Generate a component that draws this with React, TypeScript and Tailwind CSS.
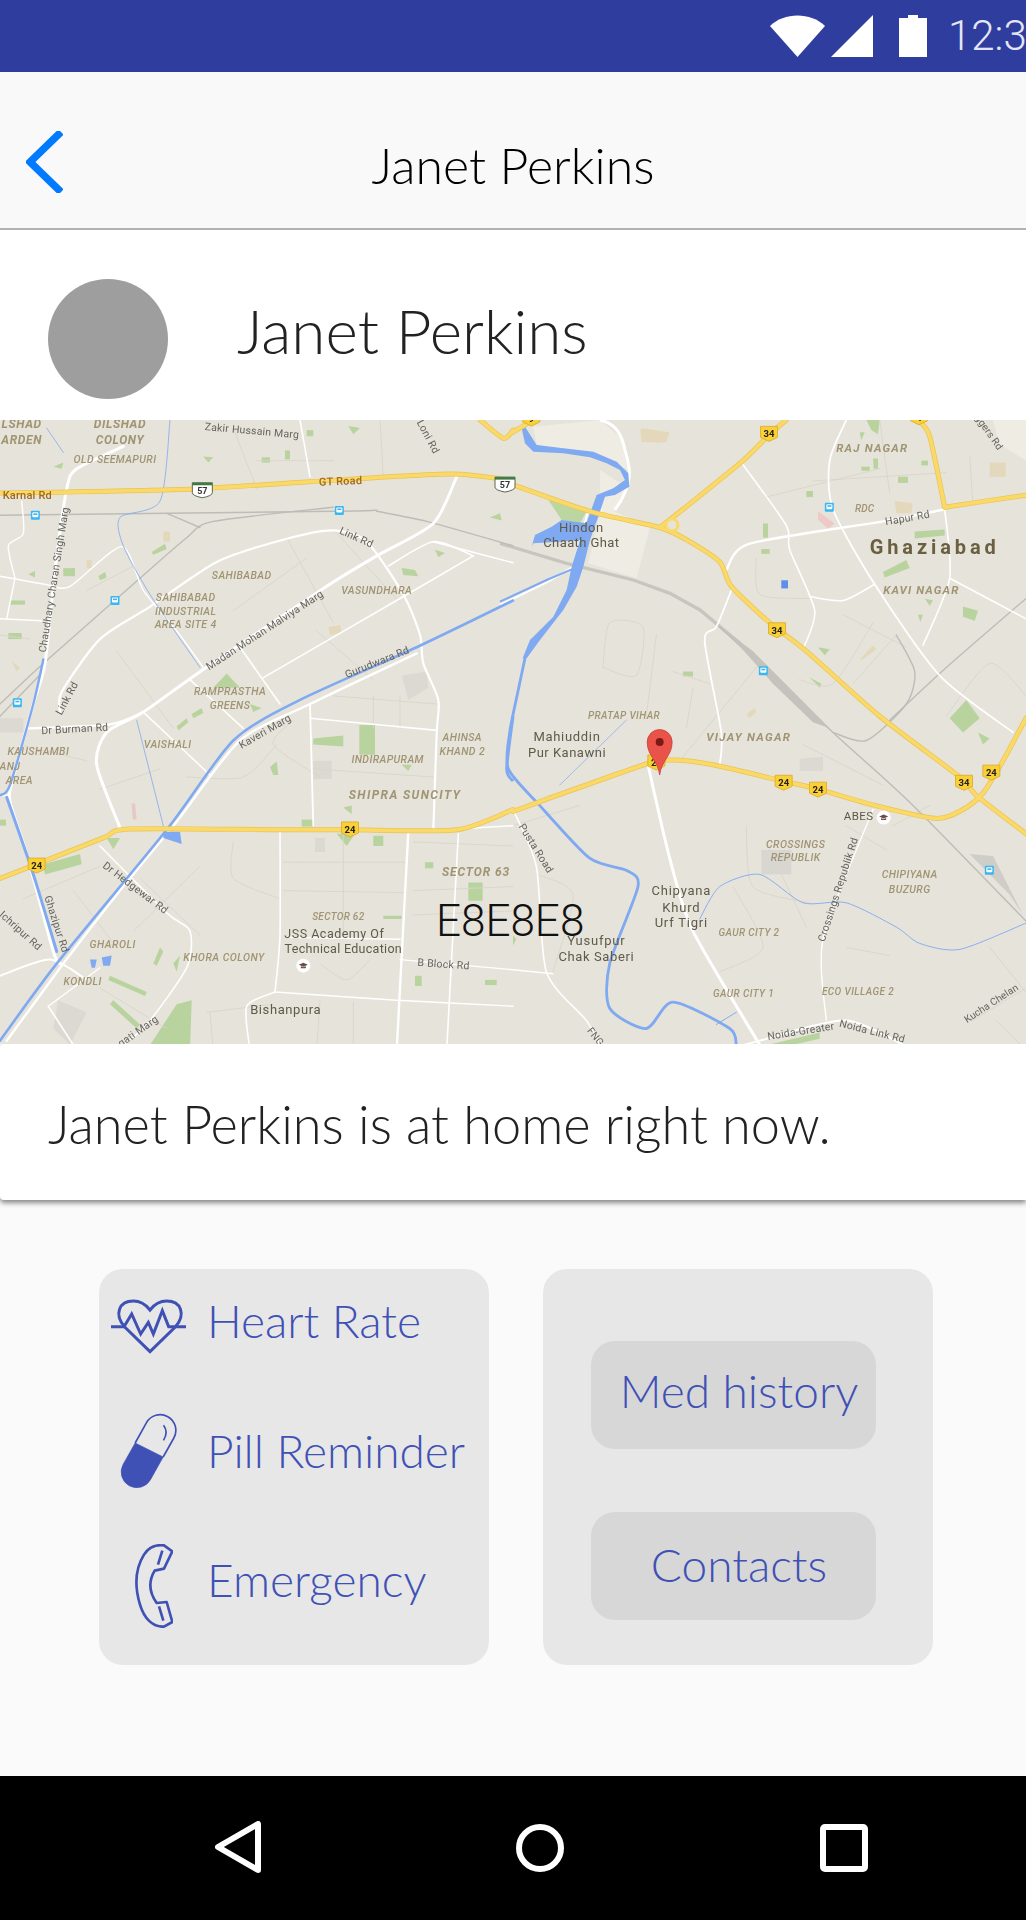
import React from "react";

// map data is noted in crop space: x 0..3078, y 0..1536, left half then right half (R adds 1539)
const K = 0.4057;
const R = 1539;
type Pt = [number, number];

const pts = (list: Pt[], off = 0) =>
  list.map(([x, y]) => `${((x + off) / 3).toFixed(1)},${(y * K).toFixed(1)}`).join(" ");

// soft curve through the noted points, roads on the map are not angular
const curve = (list: Pt[], off = 0) => {
  const p = list.map(([x, y]) => [(x + off) / 3, y * K]);
  let d = `M${p[0][0].toFixed(1)} ${p[0][1].toFixed(1)}`;
  for (let i = 0; i < p.length - 1; i++) {
    const a = p[Math.max(i - 1, 0)];
    const b = p[i];
    const c = p[i + 1];
    const e = p[Math.min(i + 2, p.length - 1)];
    const c1x = b[0] + (c[0] - a[0]) / 8;
    const c1y = b[1] + (c[1] - a[1]) / 8;
    const c2x = c[0] - (e[0] - b[0]) / 8;
    const c2y = c[1] - (e[1] - b[1]) / 8;
    d += ` C${c1x.toFixed(1)} ${c1y.toFixed(1)} ${c2x.toFixed(1)} ${c2y.toFixed(1)} ${c[0].toFixed(1)} ${c[1].toFixed(1)}`;
  }
  return d;
};

const streets: Pt[][] = [
  [[1000, 680], [1310, 700]], [[1120, 680], [1120, 760]], [[1200, 680], [1200, 760]], [[940, 860], [1300, 880]],
  [[850, 1090], [1220, 1090]], [[850, 1160], [1220, 1165]], [[1030, 1020], [1030, 1280]], [[700, 1040], [700, 1130], [840, 1180]],
  [[1240, 1040], [1539, 1050]], [[1240, 1220], [1539, 1210]], [[1240, 1160], [1539, 1150]], [[960, 1340], [1040, 1380], [1110, 1330]],
  [[620, 1460], [820, 1440]], [[630, 1460], [640, 1553]], [[960, 1430], [950, 1553]], [[1060, 1435], [1060, 1553]],
  [[700, 20], [770, 170]], [[770, 100], [1000, 100]], [[1140, 0], [1150, 140]], [[860, 290], [1000, 500]], [[1000, 270], [1200, 450]],
  [[920, 340], [700, 470]], [[950, 520], [1120, 640]], [[880, 740], [820, 800], [960, 880]], [[560, 880], [730, 880], [830, 800]],
  [[350, 570], [520, 760]], [[260, 420], [400, 360]], [[0, 530], [90, 540]], [[60, 800], [260, 840]], [[300, 910], [480, 860]],
  [[70, 1180], [300, 1100]], [[220, 1160], [350, 1300]], [[300, 1400], [500, 1500]], [[600, 1100], [400, 1260]], [[420, 1130], [600, 1270]],
];

const streetsR: Pt[][] = [
  [[270, 610], [290, 500], [390, 510], [370, 630], [270, 610]], [[430, 530], [400, 730]], [[480, 620], [590, 650]], [[540, 660], [520, 760]],
  [[0, 1000], [200, 950]], [[70, 1120], [180, 1170], [120, 1360]], [[700, 1000], [720, 1150], [890, 1190]], [[660, 1150], [750, 1300], [620, 1360]],
  [[760, 1040], [880, 1250]], [[1000, 1300], [1130, 1320]], [[1120, 1060], [1000, 1000]], [[760, 190], [1100, 120]], [[730, 340], [740, 430], [890, 440]],
  [[900, 150], [1300, 130]], [[1100, 0], [1130, 180]], [[1370, 90], [1380, 210]], [[990, 480], [1180, 560]], [[1080, 500], [960, 650], [860, 640]],
  [[1300, 730], [1430, 600], [1539, 680]], [[1020, 650], [1150, 530]], [[500, 840], [740, 600]], [[870, 800], [1110, 900]], [[1140, 1000], [1250, 950]],
  [[1430, 1300], [1539, 1410]], [[1380, 1480], [1539, 1400]], [[1450, 1480], [1539, 1553]],
];

const rail: Pt[][] = [
  [[0, 235], [1000, 225], [1130, 222]], [[1130, 225], [1280, 250], [1539, 310]], [[0, 700], [130, 600], [420, 390], [560, 290], [640, 250], [1000, 215]],
  [[0, 730], [130, 620]], [[500, 230], [600, 265]],
];

const railR: Pt[][] = [
  [[620, 510], [960, 770], [1200, 950], [1539, 1235]],
  [[960, 770], [1060, 790], [1180, 700], [1205, 620], [1150, 530]], [[1130, 740], [1300, 610], [1539, 440]],
];

const white: [Pt[], number][] = [
  [[[370, 65], [230, 120], [200, 170], [165, 370], [135, 600], [100, 700], [40, 880], [30, 940], [80, 1070], [160, 1310], [180, 1340]], 3],
  [[[180, 720], [185, 670], [300, 540], [450, 460], [650, 350], [850, 295], [1000, 272], [1100, 300], [1210, 430], [1260, 530], [1270, 600], [1315, 690], [1310, 770], [1300, 1010]], 2.2],
  [[[1370, 140], [1300, 255], [1130, 335], [980, 410], [610, 615], [430, 720], [320, 770], [290, 850], [360, 1005]], 3],
  [[[85, 760], [330, 750], [430, 720]], 2.2],
  [[[790, 635], [1200, 440], [1420, 335]], 1.6],
  [[[1420, 335], [1300, 300], [1165, 360]], 1.6],
  [[[1300, 300], [1539, 352]], 1.6],
  [[[720, 560], [840, 700]], 1.6],
  [[[570, 640], [730, 760]], 1.6],
  [[[430, 720], [630, 875]], 1.6],
  [[[930, 700], [940, 1000]], 1.8],
  [[[930, 735], [1310, 765]], 1.6],
  [[[0, 385], [135, 405], [210, 410], [365, 312], [430, 420], [530, 520], [610, 610]], 1.4],
  [[[0, 490], [125, 495]], 1.4],
  [[[45, 390], [20, 490]], 1.4],
  [[[45, 390], [25, 310], [70, 280], [65, 200]], 1.4],
  [[[900, 0], [930, 140]], 1.6],
  [[[1250, 575], [930, 700], [720, 790], [530, 990], [350, 1170], [190, 1340], [20, 1530]], 2.4],
  [[[840, 1010], [840, 1270], [825, 1410]], 1.6],
  [[[825, 1410], [740, 1445], [750, 1553]], 1.6],
  [[[825, 1410], [1190, 1430], [1539, 1445]], 1.4],
  [[[1225, 1015], [1190, 1553]], 2.4],
  [[[1375, 1020], [1340, 1553]], 1.6],
  [[[300, 1050], [500, 1215], [570, 1260], [560, 1350], [440, 1490], [350, 1553]], 1.6],
  [[[145, 1445], [230, 1553]], 1.6],
  [[[145, 1445], [300, 1350]], 1.4],
  [[[0, 1370], [150, 1330], [260, 1380]], 2],
  [[[1200, 1330], [1539, 1355]], 1.4],
  [[[860, 1275], [1200, 1280]], 1.4],
  [[[1225, 1015], [1539, 1000]], 1.6],
  [[[0, 925], [30, 925]], 2],
];

const whiteR: [Pt[], number][] = [
  [[[690, 110], [820, 260], [830, 320], [905, 470], [870, 565]], 1.6],
  [[[640, 370], [710, 305], [1110, 250], [1295, 220]], 2.4],
  [[[1000, 0], [950, 100], [960, 220], [1085, 405], [1280, 630], [1500, 770]], 1.8],
  [[[1295, 220], [1310, 390], [1230, 555]], 1.6],
  [[[890, 435], [990, 445], [1085, 405]], 1.6],
  [[[1310, 390], [1539, 490]], 1.6],
  [[[655, 420], [610, 510], [575, 545], [625, 770], [620, 850]], 1.8],
  [[[405, 850], [470, 1080], [540, 1260], [740, 1540]], 3],
  [[[640, 1553], [740, 1530], [1000, 1480], [1200, 1553]], 2],
  [[[1080, 960], [930, 1280], [940, 1480]], 1.4],
  [[[0, 960], [70, 1100], [100, 1360], [220, 1480], [270, 1553]], 1.6],
  [[[0, 1355], [120, 1365]], 1.4],
];

const yellow: Pt[][] = [
  [[0, 180], [170, 178], [580, 170], [930, 152], [1350, 133], [1539, 150]],
  [[0, 1130], [110, 1095], [310, 1030], [390, 1008], [840, 1010], [1050, 1010], [1370, 1010], [1539, 960]],
  [[1440, 0], [1510, 45], [1539, 25]],
];

const yellowR: Pt[][] = [
  [[0, 160], [230, 225], [440, 265], [520, 295], [620, 350], [655, 410], [770, 500], [880, 570], [1100, 730], [1340, 880], [1390, 925], [1539, 1020]],
  [[440, 265], [510, 220], [690, 100], [770, 35], [820, 0]],
  [[0, 30], [50, 5]],
  [[0, 965], [100, 935], [400, 848], [480, 838], [600, 850], [810, 890], [915, 910], [1085, 950], [1270, 982], [1350, 960], [1410, 920], [1470, 840], [1539, 735]],
  [[1215, 0], [1250, 40], [1295, 215]],
  [[1295, 215], [1539, 185]],
];

const water: [Pt[], number][] = [
  [[[1539, 445], [1250, 560], [900, 690], [700, 790], [500, 1010], [170, 1340], [0, 1530]], 2.6],
  [[[20, 930], [100, 1120], [170, 1310]], 3],
  [[[130, 590], [100, 700], [30, 900], [0, 925]], 2.4],
  [[[510, 0], [480, 200], [360, 240], [370, 310], [450, 430], [600, 610]], 0.8],
  [[[410, 740], [490, 1000]], 0.8],
  [[[140, 20], [190, 80]], 0.8],
];

const waterR: [Pt[], number][] = [
  [[[36, 587], [12, 680], [-10, 770], [-14, 860], [80, 950], [230, 1080], [340, 1110], [375, 1150], [290, 1340], [290, 1450], [400, 1500], [480, 1435], [650, 1500], [670, 1540]], 2.8],
  [[[560, 1230], [620, 1150], [740, 1120], [870, 1190], [1000, 1190], [1150, 1250], [1220, 1290], [1340, 1305], [1539, 1240]], 0.9],
  [[[140, 900], [340, 740]], 0.7],
  [[[610, 1490], [670, 1460]], 1],
];

const greens: Pt[][] = [
  [[610, 90], [640, 92], [625, 105]], [[785, 92], [810, 92], [810, 105], [785, 105]], [[855, 75], [870, 75], [870, 97], [855, 97]], [[920, 25], [940, 25], [940, 40], [920, 40]],
  [[1045, 15], [1080, 20], [1060, 35]], [[160, 115], [190, 105], [185, 120]], [[455, 325], [495, 305], [500, 318], [460, 332]], [[1470, 240], [1500, 230], [1505, 248]],
  [[190, 365], [225, 365], [225, 385], [190, 385]], [[295, 385], [315, 375], [320, 388], [300, 395]], [[85, 380], [105, 372], [105, 388]], [[30, 445], [75, 445], [75, 455], [30, 455]],
  [[25, 525], [65, 525], [65, 540], [25, 540]], [[680, 625], [720, 660], [640, 660]], [[530, 755], [560, 735], [565, 745], [535, 765]], [[575, 725], [605, 710], [610, 722], [580, 735]],
  [[750, 700], [785, 710], [760, 720]], [[940, 785], [1030, 778], [1030, 805], [940, 800]], [[1078, 752], [1125, 752], [1125, 825], [1078, 825]], [[810, 855], [830, 842], [835, 875], [820, 875]],
  [[905, 985], [940, 985], [940, 1002], [905, 1002]], [[1030, 955], [1055, 950], [1055, 972]], [[1205, 850], [1235, 850], [1225, 865]], [[1010, 1020], [1065, 1020], [1040, 1050]],
  [[1120, 1025], [1150, 1025], [1150, 1050], [1120, 1050]], [[320, 1030], [360, 1030], [340, 1058]], [[130, 1095], [240, 1070], [245, 1095], [135, 1120]], [[1275, 1090], [1300, 1090], [1300, 1105], [1275, 1105]],
  [[1405, 1140], [1448, 1140], [1448, 1185], [1405, 1185]], [[1245, 1370], [1265, 1370], [1265, 1395], [1245, 1395]], [[1455, 1380], [1490, 1380], [1490, 1393], [1455, 1393]], [[1150, 1222], [1205, 1222], [1205, 1230], [1150, 1230]],
  [[440, 1553], [530, 1440], [575, 1430], [570, 1553]], [[330, 1370], [440, 1410], [435, 1420], [325, 1380]], [[340, 1430], [420, 1490], [410, 1500], [330, 1440]], [[460, 1340], [480, 1300], [490, 1310], [470, 1345]],
  [[1205, 365], [1245, 370], [1255, 385], [1210, 382]], [[1305, 320], [1335, 328], [1315, 338]], [[520, 1340], [540, 1320], [530, 1360]], [[0, 985], [18, 985], [18, 1000], [0, 1000]],
];

const greensR: Pt[][] = [
  [[1040, 30], [1055, 30], [1045, 50]], [[1060, 0], [1100, 0], [1095, 35], [1075, 25]], [[1045, 115], [1070, 115], [1070, 125], [1045, 125]],
  [[1080, 95], [1095, 95], [1095, 120], [1082, 120]], [[1155, 140], [1185, 140], [1185, 155], [1155, 155]], [[1225, 100], [1245, 100], [1245, 112], [1225, 112]], [[880, 175], [900, 175], [900, 190], [880, 190]],
  [[750, 255], [765, 255], [765, 290], [750, 290]], [[745, 318], [770, 318], [770, 330], [745, 330]], [[1110, 375], [1180, 345], [1190, 365], [1115, 388]], [[1205, 275], [1295, 270], [1295, 285], [1205, 292]],
  [[1350, 460], [1395, 470], [1385, 495], [1350, 485]], [[1235, 440], [1260, 445], [1250, 458]], [[1215, 480], [1230, 480], [1222, 498]], [[915, 560], [950, 565], [935, 580]], [[510, 620], [540, 620], [540, 632], [510, 632]],
  [[890, 635], [925, 650], [920, 660]], [[1310, 735], [1360, 690], [1400, 735], [1350, 770]], [[1395, 770], [1430, 785], [1410, 800]], [[765, 1540], [920, 1510], [920, 1525], [770, 1553]], [[0, 1270], [10, 1280], [0, 1295]],
];

const blocks: [Pt[], string][] = [
  [[[915, 225], [965, 255], [945, 268], [915, 245]], "#efc9c8"],
  [[[805, 395], [825, 395], [825, 415], [805, 415]], "#5b8fe8"],
  [[[1430, 105], [1478, 105], [1478, 140], [1430, 140]], "#e4d8bc"],
  [[[385, 20], [470, 30], [460, 55], [385, 55]], "#e4d8bc"],
  [[[1145, 200], [1200, 205], [1195, 230], [1150, 230]], "#e4d8bc"],
  [[[1040, 590], [1080, 555], [1090, 565], [1050, 590]], "#e4d8bc"],
  [[[700, 725], [725, 710], [730, 720], [710, 735]], "#e4d8bc"],
  [[[745, 1060], [835, 1060], [835, 1120], [745, 1120]], "#d8d6d0"],
  [[[860, 835], [930, 830], [930, 865], [860, 865]], "#dcd9d2"],
];

const blocksL: [Pt[], string][] = [
  [[[940, 840], [995, 840], [995, 885], [940, 885]], "#dcd9d2"],
  [[[1205, 630], [1280, 620], [1285, 660], [1225, 690]], "#dcd9d2"],
  [[[0, 735], [70, 735], [70, 770], [0, 770]], "#dcd9d2"],
  [[[395, 945], [405, 945], [410, 985], [398, 985]], "#e9c7c4"],
  [[[985, 510], [1020, 505], [1025, 525], [990, 530]], "#e4d8bc"],
  [[[260, 345], [275, 345], [275, 365], [260, 365]], "#e4d8bc"],
  [[[35, 595], [60, 610], [50, 620]], "#e4d8bc"],
  [[[490, 275], [510, 275], [510, 300], [490, 300]], "#e4d8bc"],
  [[[175, 1430], [260, 1460], [210, 1540], [160, 1500]], "#dcd9d2"],
  [[[945, 1030], [975, 1030], [975, 1065], [945, 1065]], "#dcd9d2"],
];

type Label = [string, number, number, number, string, number, number?, number?];
const PLACE = "#a09473";
const ROAD = "#64645e";
const DARK = "#5f5a48";
const labels: Label[] = [
  ["LSHAD", 65, 20, 12, PLACE, 700, 0, 0.6], ["ARDEN", 65, 58, 12, PLACE, 700, 0, 0.6], ["DILSHAD", 360, 20, 12, PLACE, 700, 0, 0.6], ["COLONY", 360, 58, 12, PLACE, 700, 0, 0.6],
  ["OLD SEEMAPURI", 345, 105, 10.5, PLACE, 500, 0, 0.4], ["SAHIBABAD", 725, 393, 10.5, PLACE, 500, 0, 0.4], ["VASUNDHARA", 1130, 428, 10.5, PLACE, 500, 0, 0.4],
  ["SAHIBABAD", 557, 446, 10.5, PLACE, 500, 0, 0.4], ["INDUSTRIAL", 557, 480, 10.5, PLACE, 500, 0, 0.4], ["AREA SITE 4", 557, 513, 10.5, PLACE, 500, 0, 0.4],
  ["RAMPRASTHA", 690, 677, 10.5, PLACE, 500, 0, 0.4], ["GREENS", 690, 712, 10.5, PLACE, 500, 0, 0.4], ["VAISHALI", 503, 808, 10.5, PLACE, 500, 0, 0.4], ["KAUSHAMBI", 115, 825, 10.5, PLACE, 500, 0, 0.4],
  ["ANJ", 30, 862, 10.5, PLACE, 500, 0, 0.4], ["AREA", 58, 898, 10.5, PLACE, 500, 0, 0.4], ["INDIRAPURAM", 1163, 845, 10.5, PLACE, 500, 0, 0.4], ["AHINSA", 1387, 790, 10.5, PLACE, 500, 0, 0.4],
  ["KHAND 2", 1387, 825, 10.5, PLACE, 500, 0, 0.4], ["SHIPRA SUNCITY", 1215, 935, 12, PLACE, 700, 0, 1.4], ["SECTOR 63", 1428, 1124, 12, PLACE, 700, 0, 0.9], ["SECTOR 62", 1015, 1233, 10, PLACE, 500, 0, 0.3],
  ["GHAROLI", 338, 1302, 10.5, PLACE, 500, 0, 0.5], ["KHORA COLONY", 672, 1333, 10.5, PLACE, 500, 0, 0.5], ["KONDLI", 248, 1392, 10.5, PLACE, 500, 0, 0.5],
  ["JSS Academy Of", 1003, 1277, 12.5, DARK, 400, 0, 0.5], ["Technical Education", 1030, 1313, 12.5, DARK, 400, 0, 0.3], ["Bishanpura", 857, 1465, 13, DARK, 400, 0, 0.6],
  ["B Block Rd", 1330, 1350, 10.5, ROAD, 400, 4, 0.2], ["Karnal Rd", 82, 195, 11, "#a0691c", 500, 0, 0.2], ["GT Road", 1022, 160, 11, "#a0691c", 500, -2, 0.2],
  ["Zakir Hussain Marg", 755, 35, 10.5, ROAD, 400, 5, 0.2], ["Loni Rd", 1275, 45, 10.5, ROAD, 400, 62, 0.2], ["Link Rd", 1065, 297, 10.5, ROAD, 400, 24, 0.2], ["Link Rd", 210, 690, 10.5, ROAD, 400, -62, 0.2],
  ["Chaudhary Charan Singh Marg", 172, 395, 10.5, ROAD, 400, -81, 0.2], ["Madan Mohan Malviya Marg", 800, 525, 10.5, ROAD, 400, -33, 0.2], ["Gurudwara Rd", 1135, 605, 10.5, ROAD, 400, -22, 0.2],
  ["Kaveri Marg", 800, 775, 10.5, ROAD, 400, -30, 0.2], ["Dr Burman Rd", 225, 770, 10.5, ROAD, 400, -3, 0.2], ["Dr Hedgewar Rd", 400, 1160, 10.5, ROAD, 400, 37, 0.2], ["Ghazipur Rd", 160, 1245, 10.5, ROAD, 400, 72, 0.2],
  ["Ichripur Rd", 55, 1265, 10.5, ROAD, 400, 42, 0.2], ["Pragati Marg", 400, 1525, 10.5, ROAD, 400, -35, 0.2],
];

const labelsR: Label[] = [
  ["RAJ NAGAR", 1078, 80, 11.5, PLACE, 700, 0, 1.2], ["RDC", 1055, 228, 10, PLACE, 500, 0, 0.2], ["Hapur Rd", 1185, 250, 10.5, ROAD, 400, -10, 0.2], ["Ghaziabad", 1265, 330, 20, "#6b5f42", 700, 0, 3.9],
  ["KAVI NAGAR", 1225, 430, 11.5, PLACE, 700, 0, 1.1], ["PRATAP VIHAR", 333, 738, 10, PLACE, 500, 0, 0.4], ["VIJAY NAGAR", 707, 790, 11.5, PLACE, 700, 0, 1.3], ["Hindon", 205, 275, 13, DARK, 400, 0, 0.5],
  ["Chaath Ghat", 205, 312, 13, DARK, 400, 0, 0.4], ["Mahiuddin", 162, 790, 13, DARK, 400, 0, 0.7], ["Pur Kanawni", 162, 830, 13, DARK, 400, 0, 0.5], ["ABES", 1037, 985, 11.5, DARK, 400, 0, 0.5],
  ["CROSSINGS", 848, 1055, 10.5, PLACE, 500, 0, 0.4], ["REPUBLIK", 848, 1088, 10.5, PLACE, 500, 0, 0.4], ["CHIPIYANA", 1190, 1130, 10.5, PLACE, 500, 0, 0.4], ["BUZURG", 1190, 1165, 10.5, PLACE, 500, 0, 0.4],
  ["Chipyana", 505, 1172, 13, DARK, 400, 0, 0.8], ["Khurd", 505, 1212, 13, DARK, 400, 0, 0.8], ["Urf Tigri", 505, 1250, 13, DARK, 400, 0, 0.8], ["Yusufpur", 250, 1295, 13, DARK, 400, 0, 0.8], ["Chak Saberi", 250, 1333, 13, DARK, 400, 0, 0.6],
  ["GAUR CITY 2", 708, 1272, 10, PLACE, 500, 0, 0.4], ["GAUR CITY 1", 692, 1423, 10, PLACE, 500, 0, 0.4], ["ECO VILLAGE 2", 1035, 1418, 10, PLACE, 500, 0, 0.4], ["Crossings Republik Rd", 985, 1160, 10.5, ROAD, 400, -72, 0.2],
  ["Pusta Road", 60, 1060, 10.5, ROAD, 400, 58, 0.2], ["FNG", 240, 1525, 10, ROAD, 400, 52, 0.2], ["Noida-Greater", 865, 1515, 10.5, ROAD, 400, -9, 0.2], ["Noida Link Rd", 1075, 1515, 10.5, ROAD, 400, 14, 0.2],
  ["Kucha Chelan", 1440, 1445, 10, ROAD, 400, -33, 0.1], ["ggers Rd", 1420, 35, 10, ROAD, 400, 55, 0.1],
];

const shields: [string, number, number][] = [
  ["24", 1050, 1008], ["24", 110, 1097], ["34", 768 + R, 33], ["34", 792 + R, 517], ["34", 1353 + R, 893], ["24", 812 + R, 893], ["24", 915 + R, 910], ["24", 1435 + R, 868], ["24", 430 + R, 843], ["9", 55 + R, -5], ["4", 1218 + R, -8],
];

const buses: Pt[] = [[106, 235], [1018, 223], [345, 445], [52, 697], [949 + R, 215], [751 + R, 618], [1429 + R, 1110]];
const schools: Pt[] = [[910, 1345], [1112 + R, 980]];

function Lines({ list, off = 0, color, width }: { list: Pt[][]; off?: number; color: string; width: number }) {
  return (
    <>
      {list.map((l, i) => (
        <path key={i} d={curve(l, off)} fill="none" stroke={color} strokeWidth={width} strokeLinejoin="round" strokeLinecap="round" />
      ))}
    </>
  );
}

function Weighted({ list, off = 0, color }: { list: [Pt[], number][]; off?: number; color: string }) {
  return (
    <>
      {list.map(([l, w], i) => (
        <path key={i} d={curve(l, off)} fill="none" stroke={color} strokeWidth={w} strokeLinejoin="round" strokeLinecap="round" />
      ))}
    </>
  );
}

function Labels({ list, off = 0 }: { list: Label[]; off?: number }) {
  return (
    <>
      {list.map(([text, x, y, size, color, weight, rot = 0, sp = 0], i) => {
        const lx = (x + off) / 3;
        const ly = y * K;
        return (
          <text
            key={i}
            x={lx}
            y={ly}
            fontSize={size}
            fill={color}
            fontWeight={weight}
            fontStyle={color === PLACE ? "italic" : "normal"}
            letterSpacing={sp}
            textAnchor="middle"
            transform={rot ? `rotate(${rot} ${lx} ${ly})` : undefined}
          >
            {text}
          </text>
        );
      })}
    </>
  );
}

function MapDrawing() {
  return (
    <svg viewBox="0 0 1026 624" className="block w-full h-full blur-[0.4px] font-['Roboto',sans-serif]">
      <rect width="1026" height="624" fill="#e6e3da" />
      <polygon points={pts([[1440, 0], [1539, 0], [1539, 100], [1460, 60]], R)} fill="#efece3" />
      {/* river bend at Hindon, noted at 3x from x 500 */}
      <g transform="translate(500 0) scale(0.3333)">
        <polygon points="100,20 300,0 370,60 385,150 270,95 110,75" fill="#efece4" />
        <polygon points="300,150 385,205 345,275 450,320 410,475 265,430 300,280" fill="#efece4" />
        <polygon points="420,30 505,40 480,70 425,60" fill="#e6dcbc" />
        <polygon points="145,240 265,265 240,310 185,300" fill="#bcd6a2" />
        <path d="M0 370 L200 430 L400 480 L510 520 L600 570 L720 670" fill="none" stroke="#c6c5bf" strokeWidth="10" />
        <path d="M300 0 C345 10 365 40 375 90 C385 130 410 180 345 270" fill="none" stroke="#fff" strokeWidth="9" />
        <path d="M0 555 L145 485 L220 440 L265 270 H305" fill="none" stroke="#fff" strokeWidth="6" />
        <path d="M0 545 L140 480 L215 448" fill="none" stroke="#7fa9f0" strokeWidth="6" />
        <polygon points="75,20 110,75 190,85 280,95 350,125 385,160 388,200 345,225 315,230 300,275 270,360 250,440 230,500 190,570 120,660 80,715 68,715 90,660 160,590 200,510 215,440 240,360 270,280 290,225 340,205 375,180 360,150 320,130 270,112 190,100 100,95 75,70 65,25" fill="#7fa9f0" />
        <polygon points="95,380 105,345 155,320 185,300 260,310 250,360 180,365 100,370" fill="#7fa9f0" />
      </g>
      {blocks.map(([l, c], i) => (
        <polygon key={i} points={pts(l, R)} fill={c} />
      ))}
      {blocksL.map(([l, c], i) => (
        <polygon key={i} points={pts(l)} fill={c} />
      ))}
      {greens.map((l, i) => (
        <polygon key={i} points={pts(l)} fill="#b9d39f" />
      ))}
      {greensR.map((l, i) => (
        <polygon key={i} points={pts(l, R)} fill="#b9d39f" />
      ))}
      <Lines list={streets} color="#d9d5ca" width={0.9} />
      <Lines list={streetsR} off={R} color="#d9d5ca" width={0.9} />
      <Lines list={rail} color="#bdbcb8" width={1.4} />
      <Lines list={railR} off={R} color="#bdbcb8" width={1.4} />
      <polygon points={pts([[640, 520], [720, 570], [950, 760], [900, 745], [780, 650]], R)} fill="#c3c2bd" />
      <polygon points={pts([[1370, 1070], [1440, 1075], [1530, 1220], [1490, 1170]], R)} fill="#cfcdc7" />
      <Weighted list={white} color="#ffffff" />
      <Weighted list={whiteR} off={R} color="#ffffff" />
      <Weighted list={water} color="#7fa9f0" />
      <Weighted list={waterR} off={R} color="#7fa9f0" />
      <path d={curve([[1539, 730], [1520, 860], [1539, 890]])} fill="none" stroke="#7fa9f0" strokeWidth="3" />
      <polygon points={pts([[490, 1015], [540, 1015], [545, 1045], [490, 1030]])} fill="#7fa9f0" />
      <polygon points={pts([[305, 1325], [335, 1320], [330, 1345], [310, 1345]])} fill="#7fa9f0" />
      <polygon points={pts([[270, 1330], [290, 1330], [285, 1350], [275, 1350]])} fill="#7fa9f0" />
      <Lines list={yellow} color="#e8c455" width={5} />
      <Lines list={yellowR} off={R} color="#e8c455" width={5} />
      <Lines list={yellow} color="#fbd968" width={3.6} />
      <Lines list={yellowR} off={R} color="#fbd968" width={3.6} />
      {/* interchange loop */}
      <circle cx="672" cy="105" r="6" fill="#e6e3da" stroke="#fbd968" strokeWidth="3" />
      <Labels list={labels} />
      <Labels list={labelsR} off={R} />
      {[607, 1515].map((x) => (
        <g key={x} transform={`translate(${x / 3} ${(x === 607 ? 172 : 158) * K})`}>
          <path d="M-10 -7 H10 V3 Q10 6 0 8 Q-10 6 -10 3 Z" fill="#fff" stroke="#5a6a4a" strokeWidth="1" />
          <path d="M-10 -7 H10 V-4.5 H-10 Z" fill="#3d7a44" />
          <text y="4" fontSize="9" fontWeight="700" textAnchor="middle" fill="#333">57</text>
        </g>
      ))}
      {shields.map(([t, x, y], i) => (
        <g key={i} transform={`translate(${x / 3} ${y * K})`}>
          <path d="M-8.5 -7 H8.5 V4 L0 8 L-8.5 4 Z" fill="#fbd034" stroke="#d8a92a" strokeWidth="0.8" strokeLinejoin="round" />
          <text y="4" fontSize="9.5" fontWeight="700" textAnchor="middle" fill="#222">{t}</text>
        </g>
      ))}
      {buses.map(([x, y], i) => (
        <g key={i} transform={`translate(${x / 3} ${y * K})`}>
          <rect x="-4.5" y="-4.5" width="9" height="9" rx="1" fill="#39b7f3" />
          <rect x="-3" y="-3" width="6" height="5" rx="1" fill="#fff" />
          <rect x="-2" y="-2" width="4" height="1.6" fill="#39b7f3" />
        </g>
      ))}
      {schools.map(([x, y], i) => (
        <g key={i} transform={`translate(${x / 3} ${y * K})`}>
          <circle r="7" fill="#fff" />
          <path d="M-4.5 -1 L0 -3 L4.5 -1 L0 1 Z M-2.5 0.5 V2.5 H2.5 V0.5 L0 1.6 Z" fill="#6b4a4a" />
        </g>
      ))}
      <g transform={`translate(${(440 + R) / 3} 0)`}>
        <path d="M0 355 C-2 340 -12.5 336 -12.5 322 A12.5 12.5 0 0 1 12.5 322 C12.5 336 2 340 0 355 Z" fill="#ea5349" stroke="#c23a32" strokeWidth="0.7" />
        <circle cy="322" r="4" fill="#7a1a14" />
      </g>
    </svg>
  );
}

function HeartIcon() {
  return (
    <svg viewBox="93 145 225 165" className="w-[75px] h-[55px] shrink-0" fill="none" stroke="#3f51b5" strokeLinejoin="miter">
      <path d="M210 303 L135 230 C100 190 118 151 160 151 C185 151 200 165 210 178 C220 165 235 151 260 151 C302 151 320 190 285 230 Z" strokeWidth="9" />
      <path d="M93 228 H132 L155 190 L182 250 L205 215 L220 250 L247 180 L266 228 H318" strokeWidth="9" />
    </svg>
  );
}

function PillIcon() {
  return (
    <svg viewBox="120 488 170 228" className="w-[57px] h-[76px] shrink-0" fill="none" stroke="#3f51b5">
      <path d="M165 578 L249 620 L211 688 A47 47 0 0 1 129 642 Z" fill="#3f51b5" strokeWidth="2" />
      <path d="M165 578 L199 517 A47 47 0 0 1 281 563 L249 620" strokeWidth="5" />
      <path d="M250 525 Q266 545 250 570" strokeWidth="5" />
    </svg>
  );
}

function PhoneIcon() {
  return (
    <svg viewBox="163 878 114 252" className="w-[38px] h-[84px] shrink-0" fill="none" stroke="#3f51b5" strokeWidth="8" strokeLinejoin="round">
      <path d="M250 882 L275 900 L250 952 L222 958 C203 990 203 1020 228 1055 L258 1052 L275 1112 L250 1126 C215 1128 190 1100 178 1060 C160 1000 165 950 190 910 C205 885 230 880 250 882 Z" />
      <path d="M245 898 L232 940 M235 1065 L248 1108" />
    </svg>
  );
}

export default function App() {
  return (
    <div className="flex flex-col w-[1026px] h-[1920px] overflow-hidden bg-[#fafafa] font-['Lato',sans-serif] font-light">
      {/* status bar */}
      <div className="flex items-center justify-end h-[72px] shrink-0 bg-[#2f3e9e] overflow-hidden">
        <svg viewBox="0 0 55 42" className="w-[55px] h-[42px] mr-[6px] shrink-0" fill="#fff">
          <path d="M0 11 C14 -3 41 -3 55 11 L27.5 42 Z" strokeLinejoin="round" />
        </svg>
        <svg viewBox="0 0 42 42" className="w-[42px] h-[42px] mr-[26px] shrink-0" fill="#fff">
          <path d="M42 0 V42 H0 Z" />
        </svg>
        <svg viewBox="0 0 28 42" className="w-[28px] h-[42px] mr-[21px] shrink-0" fill="#fff">
          <path d="M0 3 H9 V0 H19 V3 H28 V42 H0 Z" />
        </svg>
        <span className="w-[78px] shrink-0 overflow-hidden whitespace-nowrap font-['Roboto',sans-serif] text-[42px] font-light leading-none text-[#e4e6f4]">12:30</span>
      </div>

      {/* nav */}
      <div className="relative flex items-center justify-center h-[158px] pt-[30px] shrink-0 bg-[#f9f9f9] border-b-2 border-[#b2b2b2]">
        <svg viewBox="0 0 37 62" className="absolute left-[26px] top-[59px] w-[37px] h-[62px]" fill="none" stroke="#007aff" strokeWidth="7.5" strokeLinecap="butt">
          <path d="M35 1 L4 31 L35 61" />
        </svg>
        <h1 className="text-[50px] leading-none text-black">Janet Perkins</h1>
      </div>

      {/* profile */}
      <div className="flex items-center h-[190px] shrink-0 bg-white pl-12 gap-[69px]">
        <div className="w-[120px] h-[120px] mt-[28px] rounded-full bg-[#9e9e9e]" />
        <span className="mt-[10px] text-[62px] leading-none text-[#222]">Janet Perkins</span>
      </div>

      {/* map */}
      <div className="relative h-[624px] shrink-0 overflow-hidden">
        <MapDrawing />
        <span className="absolute left-[436px] top-[479px] font-['Roboto',sans-serif] font-light text-[44px] leading-none text-[#111]">E8E8E8</span>
      </div>

      {/* location line */}
      <div className="flex items-center h-[156px] pt-[4px] shrink-0 bg-white pl-12 rounded-l-[4px] shadow-[0_3px_5px_rgba(0,0,0,0.45)]">
        <span className="text-[52.3px] leading-none text-[#222]">Janet Perkins is at home right now.</span>
      </div>

      {/* actions */}
      <div className="flex gap-[54px] pl-[99px] mt-[69px]">
        <div className="flex flex-col w-[390px] h-[396px] rounded-[24px] bg-[#e7e7e7] text-[46px] text-[#3f51b5]">
          <div className="flex items-center h-[54px] mt-[30px] pl-3 gap-[21px]">
            <HeartIcon />
            <span className="pb-[10px] leading-none">Heart Rate</span>
          </div>
          <div className="flex items-center h-[76px] mt-[60px] pl-[21px] gap-[30px]">
            <PillIcon />
            <span className="leading-none">Pill Reminder</span>
          </div>
          <div className="flex items-center h-[84px] mt-[55px] pl-[36px] gap-[34px]">
            <PhoneIcon />
            <span className="pb-[12px] leading-none">Emergency</span>
          </div>
        </div>
        <div className="flex flex-col items-start w-[390px] h-[396px] pl-[48px] pt-[72px] gap-[63px] rounded-[24px] bg-[#e7e7e7] text-[46px] text-[#3f51b5]">
          <div className="flex items-center justify-center w-[285px] h-[108px] pl-[11px] pb-[10px] rounded-[24px] bg-[#d7d7d7]">Med history</div>
          <div className="flex items-center justify-center w-[285px] h-[108px] pl-[11px] pb-[4px] rounded-[24px] bg-[#d7d7d7]">Contacts</div>
        </div>
      </div>

      {/* system nav */}
      <div className="relative flex-1" />
      <div className="relative h-[144px] shrink-0 bg-black">
        <svg viewBox="0 0 46 52" className="absolute left-[215px] top-[45px] w-[46px] h-[52px]" fill="none" stroke="#fff" strokeWidth="6" strokeLinejoin="round">
          <path d="M43 3 V49 L3 26 Z" />
        </svg>
        <svg viewBox="0 0 48 48" className="absolute left-[516px] top-[48px] w-[48px] h-[48px]" fill="none" stroke="#fff" strokeWidth="6">
          <circle cx="24" cy="24" r="21" />
        </svg>
        <svg viewBox="0 0 48 48" className="absolute left-[820px] top-[48px] w-[48px] h-[48px]" fill="none" stroke="#fff" strokeWidth="6" strokeLinejoin="round">
          <rect x="3" y="3" width="42" height="42" rx="2" />
        </svg>
      </div>
    </div>
  );
}
